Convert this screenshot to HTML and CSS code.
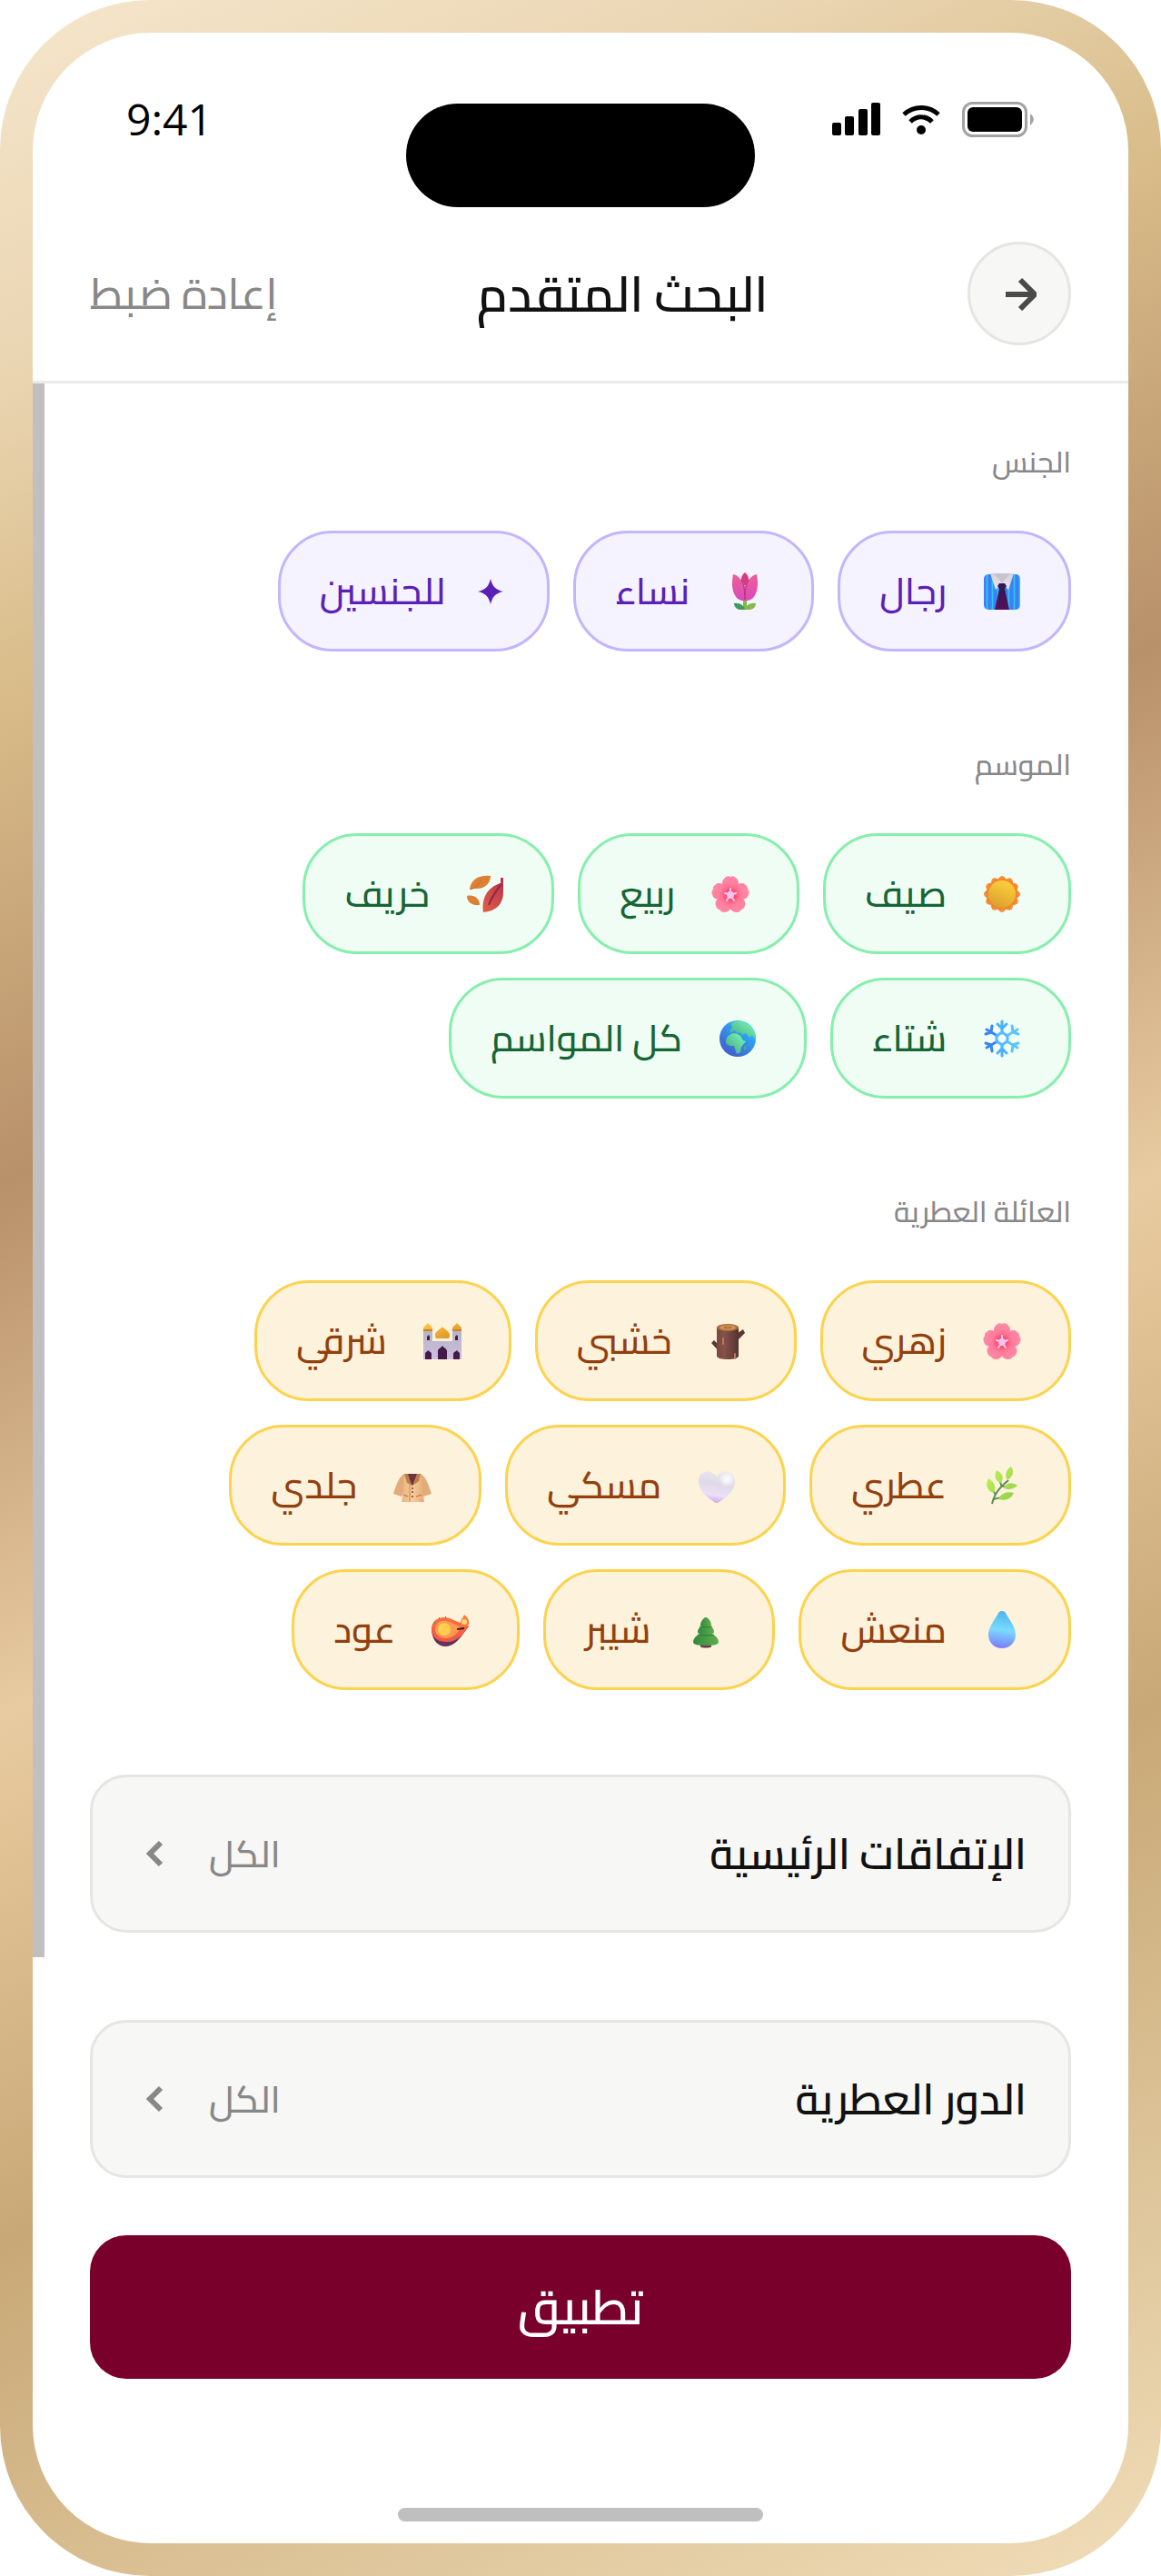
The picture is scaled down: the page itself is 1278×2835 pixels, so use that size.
FILE: index.html
```
<!DOCTYPE html>
<html lang="ar" dir="rtl">
<head>
    <meta charset="UTF-8">
    <meta name="viewport" content="width=device-width, initial-scale=1">
    <title>البحث المتقدم</title>
    <link rel="stylesheet" href="styles.css">
</head>
<body>
    <svg class="sprite" aria-hidden="true">
        <defs>
            <linearGradient id="g-petal" x1="0" y1="0" x2="0" y2="1">
                <stop offset="0" stop-color="#ff8aa6"/>
                <stop offset="1" stop-color="#ff6f95"/>
            </linearGradient>
            <radialGradient id="g-heart-pink">
                <stop offset="0" stop-color="#ff2f50"/>
                <stop offset=".5" stop-color="#ff4d6c" stop-opacity=".8"/>
                <stop offset="1" stop-color="#ff7d9c" stop-opacity="0"/>
            </radialGradient>
            <linearGradient id="g-stripe" x1="0" y1="0" x2="6" y2="0" gradientUnits="userSpaceOnUse" spreadMethod="repeat">
                <stop offset="0" stop-color="#3b82f0"/>
                <stop offset=".5" stop-color="#3b82f0"/>
                <stop offset=".75" stop-color="#2fc4fb"/>
                <stop offset="1" stop-color="#3b82f0"/>
            </linearGradient>
            <linearGradient id="g-collar" x1="0" y1="0" x2="0" y2="1">
                <stop offset="0" stop-color="#d2d2d4"/>
                <stop offset="1" stop-color="#f1e2fb"/>
            </linearGradient>
            <linearGradient id="g-tie" x1="0" y1="0" x2="0" y2="1">
                <stop offset="0" stop-color="#2c1a4f"/>
                <stop offset="1" stop-color="#54125c"/>
            </linearGradient>
            <linearGradient id="g-tulip" x1="0" y1="0" x2="0" y2="1">
                <stop offset="0" stop-color="#ee5f96"/>
                <stop offset="1" stop-color="#d94bbb"/>
            </linearGradient>
            <linearGradient id="g-sun" x1=".7" y1="0" x2=".3" y2="1">
                <stop offset="0" stop-color="#ffd13c"/>
                <stop offset="1" stop-color="#d9a02e"/>
            </linearGradient>
            <linearGradient id="g-rays" x1="0" y1="0" x2="1" y2="1">
                <stop offset="0" stop-color="#f9a03a"/>
                <stop offset="1" stop-color="#f0762c"/>
            </linearGradient>
            <linearGradient id="g-leaf" x1="1" y1="0" x2="0" y2="1">
                <stop offset="0" stop-color="#b93250"/>
                <stop offset="1" stop-color="#de6243"/>
            </linearGradient>
            <linearGradient id="g-leaf2" x1="0" y1="0" x2="1" y2="1">
                <stop offset="0" stop-color="#ea7c35"/>
                <stop offset="1" stop-color="#cf8434"/>
            </linearGradient>
            <linearGradient id="g-sea" x1=".8" y1=".2" x2=".2" y2="1">
                <stop offset="0" stop-color="#26b6ff"/>
                <stop offset="1" stop-color="#4656c8"/>
            </linearGradient>
            <linearGradient id="g-land" x1="1" y1="0" x2="0" y2="1">
                <stop offset="0" stop-color="#7dffb4"/>
                <stop offset="1" stop-color="#3f9f86"/>
            </linearGradient>
            <linearGradient id="g-wood" x1="0" y1="0" x2="1" y2="0">
                <stop offset="0" stop-color="#7a4840"/>
                <stop offset=".35" stop-color="#85524a"/>
                <stop offset="1" stop-color="#54332f"/>
            </linearGradient>
            <linearGradient id="g-dome" x1="0" y1="0" x2="1" y2="1">
                <stop offset="0" stop-color="#ffc93f"/>
                <stop offset="1" stop-color="#d98b24"/>
            </linearGradient>
            <linearGradient id="g-wall" x1="0" y1="0" x2="0" y2="1">
                <stop offset="0" stop-color="#b8b3c4"/>
                <stop offset="1" stop-color="#cdbfdf"/>
            </linearGradient>
            <linearGradient id="g-herb" x1="0" y1="0" x2="1" y2="1">
                <stop offset="0" stop-color="#c8f25c"/>
                <stop offset="1" stop-color="#8fcf45"/>
            </linearGradient>
            <linearGradient id="g-heart" x1=".6" y1="0" x2=".4" y2="1">
                <stop offset="0" stop-color="#e9e7ee"/>
                <stop offset=".4" stop-color="#dedae6"/>
                <stop offset=".75" stop-color="#ecdffa"/>
                <stop offset="1" stop-color="#c9a6f0"/>
            </linearGradient>
            <radialGradient id="g-shine">
                <stop offset="0" stop-color="#fff"/>
                <stop offset="1" stop-color="#fff" stop-opacity="0"/>
            </radialGradient>
            <linearGradient id="g-coat" x1="0" y1="0" x2="1" y2="0">
                <stop offset="0" stop-color="#e9b581"/>
                <stop offset=".5" stop-color="#f6cb95"/>
                <stop offset="1" stop-color="#e4ab7c"/>
            </linearGradient>
            <linearGradient id="g-drop" x1=".5" y1="0" x2=".4" y2="1">
                <stop offset="0" stop-color="#4db4e6"/>
                <stop offset=".5" stop-color="#79dcff"/>
                <stop offset="1" stop-color="#7b79fb"/>
            </linearGradient>
            <linearGradient id="g-tree" x1="0" y1="0" x2="1" y2="0">
                <stop offset="0" stop-color="#2f8a3c"/>
                <stop offset="1" stop-color="#62ad4e"/>
            </linearGradient>
            <linearGradient id="g-lamp" x1="0" y1="0" x2="0" y2="1">
                <stop offset="0" stop-color="#ff6f3c"/>
                <stop offset="1" stop-color="#f9543f"/>
            </linearGradient>
        </defs>

        <symbol id="i-shirt" viewBox="0 0 42 42">
            <rect x="1" y="2" width="40" height="39" rx="5" fill="url(#g-stripe)"/>
            <path d="M8 1h26L28 19l-7-7-7 7z" fill="url(#g-collar)"/>
            <path d="M12 1h18l-9 11z" fill="#c6c4ca"/>
            <path d="M18 12h6l2 3-2 3 5 23H13l5-23-2-3z" fill="url(#g-tie)"/>
        </symbol>

        <symbol id="i-tulip" viewBox="0 0 42 42">
            <rect x="19" y="27" width="4" height="14" fill="#84b93e"/>
            <path d="M9 34c6-1 11 2 12 7h-6c-4-1-6-4-6-7z" fill="#3d9c5c"/>
            <path d="M33 34c-6-1-11 2-12 7h6c4-1 6-4 6-7z" fill="#86b84f"/>
            <path d="M21 0c4 3 5 8 4 14h-8C16 8 17 3 21 0z" fill="#d63d80"/>
            <path d="M8 2c5 1 9 5 13 13C25 7 29 3 34 2c2 10 1 18-2 23-3 6-8 6-11 6s-8 0-11-6C7 20 6 12 8 2z" fill="url(#g-tulip)"/>
            <path d="M17 8c1 3 4 7 4 22 0-15 3-19 4-22" fill="none" stroke="#b93382" stroke-width="1"/>
        </symbol>

        <symbol id="i-blossom" viewBox="0 0 42 42">
            <g fill="url(#g-petal)">
                <path id="petal" d="M21 22C11 15 10 6 15 3c2-2 4-2 6-1 2-1 4-1 6 1 5 3 4 12-6 19z"/>
                <use href="#petal" transform="rotate(72 21 22)"/>
                <use href="#petal" transform="rotate(144 21 22)"/>
                <use href="#petal" transform="rotate(216 21 22)"/>
                <use href="#petal" transform="rotate(288 21 22)"/>
            </g>
            <circle cx="21" cy="22" r="13" fill="url(#g-heart-pink)"/>
            <g stroke="#fbcdf5" stroke-width="2" stroke-linecap="round">
                <path d="M21 22V15"/>
                <path d="M21 22l6-2"/>
                <path d="M21 22l4 6"/>
                <path d="M21 22l-4 6"/>
                <path d="M21 22l-6-2"/>
            </g>
            <circle cx="21" cy="22" r="4" fill="#f2c4f6"/>
        </symbol>

        <symbol id="i-sun" viewBox="0 0 42 42">
            <circle cx="21" cy="21" r="17" fill="url(#g-rays)"/>
            <g fill="url(#g-rays)">
                <path id="ray" d="M15 6c2-1 3-5 6-5s4 4 6 5z"/>
                <use href="#ray" transform="rotate(30 21 21)"/>
                <use href="#ray" transform="rotate(60 21 21)"/>
                <use href="#ray" transform="rotate(90 21 21)"/>
                <use href="#ray" transform="rotate(120 21 21)"/>
                <use href="#ray" transform="rotate(150 21 21)"/>
                <use href="#ray" transform="rotate(180 21 21)"/>
                <use href="#ray" transform="rotate(210 21 21)"/>
                <use href="#ray" transform="rotate(240 21 21)"/>
                <use href="#ray" transform="rotate(270 21 21)"/>
                <use href="#ray" transform="rotate(300 21 21)"/>
                <use href="#ray" transform="rotate(330 21 21)"/>
            </g>
            <circle cx="21" cy="21" r="15" fill="url(#g-sun)"/>
        </symbol>

        <symbol id="i-snow" viewBox="0 0 42 42">
            <g fill="none" stroke-width="3" stroke-linecap="round" stroke-linejoin="round">
                <path d="M21 15V2M16 5l5 5 5-5" stroke="#4db0fb"/>
                <path d="M26 18l12-7M32 7l1 7 6 2" stroke="#5ac6ff"/>
                <path d="M26 24l12 7M32 35l1-7 6-2" stroke="#5ac6ff"/>
                <path d="M21 27v13M16 37l5-5 5 5" stroke="#4db0fb"/>
                <path d="M16 24L4 31M10 35l-1-7-6-2" stroke="#3b82f6"/>
                <path d="M16 18L4 11M10 7L9 14l-6 2" stroke="#3b82f6"/>
                <path d="M21 14l6 4v6l-6 4-6-4v-6z" stroke="#55bdff"/>
            </g>
        </symbol>

        <symbol id="i-leaves" viewBox="0 0 42 42">
            <path d="M4 15C6 5 13 0 27 1c0 8-6 15-18 14l-5 1z" fill="url(#g-leaf2)"/>
            <path d="M5 16c5-2 9-6 12-10" fill="none" stroke="#c66a2b" stroke-width="1"/>
            <path d="M1 23c8-2 14 3 14 10C7 34 1 30 1 23z" fill="url(#g-leaf2)"/>
            <path d="M19 41c-2-14 3-27 19-32V3h3v16c0 13-8 21-22 22z" fill="url(#g-leaf)"/>
            <path d="M39 10c-5 6-10 13-14 23" fill="none" stroke="#8f2748" stroke-width="2"/>
        </symbol>

        <symbol id="i-globe" viewBox="0 0 42 42">
            <circle cx="21" cy="21" r="20" fill="url(#g-sea)"/>
            <path d="M14 4c5-3 11-3 15-1 6 3 9 7 11 12 1 3 1 5 0 7l-3-5-3 3-4-5-4 2-3-3-3 1-2-3-4 3-2-3 3-3z" fill="url(#g-land)"/>
            <path d="M12 17c4-3 9-2 12 1l3 5 3 1-5 6-1 6-4 2-3-9c-4 0-8 0-9-4 0-4 1-6 4-8z" fill="url(#g-land)"/>
            <path d="M28 30l3-2-1 5-2 1z" fill="#4ea886"/>
        </symbol>

        <symbol id="i-wood" viewBox="0 0 42 42">
            <path d="M32 20l8-8-2-4-9 6zM12 26L6 20l-3 3 9 10z" fill="#5b3833"/>
            <path d="M9 6h24v31c0 3-6 4-12 4S9 40 9 37z" fill="url(#g-wood)"/>
            <ellipse cx="21" cy="6" rx="12" ry="4" fill="#a8693c"/>
            <ellipse cx="21" cy="6" rx="9" ry="3" fill="#d39352"/>
            <ellipse cx="21" cy="6" rx="4" ry="1" fill="none" stroke="#a8693c" stroke-width="1"/>
            <path d="M16 18v6M29 35v5" stroke="#c07360" stroke-width="2" stroke-linecap="round"/>
        </symbol>

        <symbol id="i-mosque" viewBox="0 0 42 42">
            <path d="M0 10h10v11h22V10h10v31H0z" fill="url(#g-wall)"/>
            <path d="M0 9c-1-4 3-5 5-8 2 3 6 4 5 8zM32 9c-1-4 3-5 5-8 2 3 6 4 5 8zM14 18c-4-7 4-9 7-13 3 4 11 6 7 13z" fill="url(#g-dome)"/>
            <path d="M0 9h10M32 9h10" stroke="#c9822a" stroke-width="2"/>
            <path d="M16 41V32c0-3 3-3 5-6 2 3 5 3 5 6v9zM2 41v-6c0-2 2-2 3-4 2 2 4 2 4 4v6zM33 41v-6c0-2 2-2 4-4 1 2 3 2 3 4v6zM4 20v-4l2-2 1 2v4zM35 20v-4l2-2 1 2v4z" fill="#421a4c"/>
        </symbol>

        <symbol id="i-herb" viewBox="0 0 42 42">
            <path d="M10 41c3-13 10-19 18-26M12 36c7-2 11-2 18-5M14 31l-6-9M21 23l-3-9M22 22h13" fill="none" stroke="#5c8a55" stroke-width="2"/>
            <path d="M31 0c4 5 2 11-4 15-4-6-1-12 4-15zM15 4c6 3 9 8 5 14-7-2-8-8-5-14zM6 13c7 4 9 10 6 16-7-1-10-9-6-16zM38 21c-6 5-12 5-16 2 5-6 11-6 16-2zM34 29c-3 7-10 9-17 7 3-7 10-9 17-7z" fill="url(#g-herb)"/>
        </symbol>

        <symbol id="i-heart" viewBox="0 0 42 42">
            <path id="heart" d="M21 40c-2 0-4-2-7-4C6 30 1 24 1 16 1 4 16 2 21 12 26 2 41 4 41 16c0 8-5 14-13 20-3 2-5 4-7 4z" fill="url(#g-heart)"/>
            <circle cx="32" cy="14" r="9" fill="url(#g-shine)"/>
        </symbol>

        <symbol id="i-coat" viewBox="0 0 42 42">
            <path d="M12 8C6 11 3 21 0 30l9 3 5-10zM30 8c6 3 9 13 12 22l-9 3-5-10z" fill="#e3ab7a"/>
            <path d="M12 8h18l4 31H9l2-12z" fill="url(#g-coat)"/>
            <path d="M14 8h14l-4 10-3 3-4-3z" fill="#70323e"/>
            <path d="M12 8h4l3 9 2 4-6-3zM30 8h-4l-5 13 7-5z" fill="#bd7e4e"/>
            <path d="M18 20v19" stroke="#c58c5c" stroke-width="1"/>
            <path d="M11 31l5 2M31 31l-6 2" stroke="#c2674a" stroke-width="1"/>
            <g fill="#7e3f36">
                <circle cx="21" cy="24" r="1"/>
                <circle cx="21" cy="28" r="1"/>
                <circle cx="21" cy="33" r="1"/>
            </g>
        </symbol>

        <symbol id="i-drop" viewBox="0 0 42 42">
            <path d="M21 0c3 0 4 2 5 4 4 7 10 14 10 22 0 9-7 15-15 15S6 35 6 26C6 18 12 11 16 4c1-2 2-4 5-4z" fill="url(#g-drop)"/>
        </symbol>

        <symbol id="i-tree" viewBox="0 0 42 42">
            <path d="M15 35h12v4c0 2-12 2-12 0z" fill="#6b3b4b"/>
            <path d="M21 24c9 0 14 6 14 10 0 3-5 4-14 4S7 37 7 34c0-4 5-10 14-10z" fill="url(#g-tree)"/>
            <path d="M21 15c6 0 9 5 9 8 0 4-18 4-18 0 0-3 3-8 9-8z" fill="url(#g-tree)"/>
            <path d="M21 7c3 0 6 6 6 8 0 3-12 3-12 0 0-2 3-8 6-8z" fill="url(#g-tree)"/>
            <path d="M14 17c4 1 10 1 14 0M12 26c6 1 12 1 18 0" fill="none" stroke="#2b7d2e" stroke-width="1"/>
        </symbol>

        <symbol id="i-lamp" viewBox="0 0 42 42">
            <path d="M0 18c0 9 3 20 15 21 12 0 18-12 26-22z" fill="#6a2f5c"/>
            <path d="M0 20C0 8 12 5 20 8c7 3 13 6 21 8-5 9-13 18-24 18C6 34 0 28 0 20z" fill="url(#g-lamp)"/>
            <path d="M4 20c0-8 8-11 16-8l13 6c-5 7-10 12-17 12C9 30 4 26 4 20z" fill="#ff9a55"/>
            <circle cx="14" cy="20" r="7" fill="#ffcf4d"/>
            <path d="M28 20l8-1" stroke="#3b1c3c" stroke-width="2"/>
            <path d="M36 4c4 3 6 7 5 10-1 4-8 4-9 0-1-4 3-6 4-10z" fill="#ff7843"/>
            <circle cx="36" cy="12" r="3" fill="#ffdc6a"/>
            <path d="M3 13h1M8 8h1M15 7h1M2 25h1M8 32h1M18 33h1M25 30h1" stroke="#3f9a5e" stroke-width="2"/>
        </symbol>
    </svg>

    <div class="phone">
        <div class="island"></div>
        <div class="screen">
            <div class="status">
                <span class="time">9:41</span>
                <div class="status-icons">
                    <svg class="signal" viewBox="0 0 53 36">
                        <rect x="0" y="22" width="10" height="14" rx="2"/>
                        <rect x="14" y="15" width="10" height="21" rx="2"/>
                        <rect x="29" y="7" width="10" height="29" rx="2"/>
                        <rect x="43" y="0" width="10" height="36" rx="2"/>
                    </svg>
                    <svg class="wifi" viewBox="0 0 42 36">
                        <path d="M2 13C13 3 29 3 40 13M9 21c7-7 17-7 24 0" fill="none" stroke="#000" stroke-width="5"/>
                        <circle cx="21" cy="30" r="5"/>
                    </svg>
                    <svg class="battery" viewBox="0 0 80 39">
                        <rect x="1.5" y="1.5" width="69" height="36" rx="10" fill="none" stroke="#a3a3a3" stroke-width="3"/>
                        <rect x="6" y="6" width="60" height="27" rx="6"/>
                        <path d="M75 13c5 4 5 9 0 13z" fill="#a3a3a3"/>
                    </svg>
                </div>
            </div>

            <header class="header">
                <button class="back" type="button" aria-label="رجوع">
                    <svg viewBox="0 0 38 38"><path d="M4 20h32M20 4l16 16-16 16" fill="none" stroke="#4a4a4a" stroke-width="6"/></svg>
                </button>
                <h1 class="title">البحث المتقدم</h1>
                <button class="reset" type="button">إعادة ضبط</button>
            </header>

            <main class="content">
                <section class="group purple">
                    <h2>الجنس</h2>
                    <div class="chips">
                        <button class="chip" type="button"><svg class="icon"><use href="#i-shirt"/></svg>رجال</button>
                        <button class="chip" type="button"><svg class="icon"><use href="#i-tulip"/></svg>نساء</button>
                        <button class="chip" type="button"><svg class="star" viewBox="0 0 38 38"><path d="M19 5c2 8 5 12 14 14-9 2-12 6-14 14-2-8-5-12-14-14 9-2 12-6 14-14z" fill="#5b21b6"/></svg>للجنسين</button>
                    </div>
                </section>

                <section class="group green">
                    <h2>الموسم</h2>
                    <div class="chips">
                        <button class="chip" type="button"><svg class="icon"><use href="#i-sun"/></svg>صيف</button>
                        <button class="chip" type="button"><svg class="icon"><use href="#i-blossom"/></svg>ربيع</button>
                        <button class="chip" type="button"><svg class="icon"><use href="#i-leaves"/></svg>خريف</button>
                        <button class="chip" type="button"><svg class="icon"><use href="#i-snow"/></svg>شتاء</button>
                        <button class="chip" type="button"><svg class="icon"><use href="#i-globe"/></svg>كل المواسم</button>
                    </div>
                </section>

                <section class="group amber">
                    <h2>العائلة العطرية</h2>
                    <div class="chips">
                        <button class="chip" type="button"><svg class="icon"><use href="#i-blossom"/></svg>زهري</button>
                        <button class="chip" type="button"><svg class="icon"><use href="#i-wood"/></svg>خشبي</button>
                        <button class="chip" type="button"><svg class="icon"><use href="#i-mosque"/></svg>شرقي</button>
                        <button class="chip" type="button"><svg class="icon"><use href="#i-herb"/></svg>عطري</button>
                        <button class="chip" type="button"><svg class="icon"><use href="#i-heart"/></svg>مسكي</button>
                        <button class="chip" type="button"><svg class="icon"><use href="#i-coat"/></svg>جلدي</button>
                        <button class="chip" type="button"><svg class="icon"><use href="#i-drop"/></svg>منعش</button>
                        <button class="chip" type="button"><svg class="icon"><use href="#i-tree"/></svg>شيبر</button>
                        <button class="chip" type="button"><svg class="icon"><use href="#i-lamp"/></svg>عود</button>
                    </div>
                </section>

                <button class="picker" type="button">
                    <span>الإتفاقات الرئيسية</span>
                    <span class="value">الكل
                        <svg class="chevron" viewBox="0 0 20 30"><path d="M17 3L5 15l12 12" fill="none" stroke="#888" stroke-width="6"/></svg>
                    </span>
                </button>
                <button class="picker" type="button">
                    <span>الدور العطرية</span>
                    <span class="value">الكل
                        <svg class="chevron" viewBox="0 0 20 30"><path d="M17 3L5 15l12 12" fill="none" stroke="#888" stroke-width="6"/></svg>
                    </span>
                </button>
                <div class="scrollbar"></div>
            </main>

            <footer class="footer">
                <button class="apply" type="button">تطبيق</button>
                <div class="home"></div>
            </footer>
        </div>
    </div>
</body>
</html>
```
FILE: styles.css
```
*{
    box-sizing: border-box;
    margin: 0;
    padding: 0;
}
body{
    background-color: #fff;
    font-family: Cairo, "DejaVu Sans", sans-serif;
    color: #111;
}
button{
    font-family: inherit;
    color: inherit;
    background: none;
    border: 0;
    cursor: pointer;
}
.sprite{
    position: absolute;
    width: 0;
    height: 0;
}

/* device frame */
.phone{
    position: relative;
    display: flex;
    min-height: 100vh;
    padding: 36px;
    border-radius: 165px;
    background: linear-gradient(155deg, #f5e6cc 0%, #ead5b2 12%, #d9bd8a 22%, #b8906a 38%, #e8cba0 55%, #c8a876 72%, #f0ddb8 100%);
}
.screen{
    display: flex;
    flex-direction: column;
    flex: 1;
    min-width: 0;
    border-radius: 130px;
    background-color: #fff;
}
.island{
    position: absolute;
    top: 114px;
    left: 50%;
    width: 384px;
    height: 114px;
    margin-left: -192px;
    border-radius: 57px;
    background-color: #000;
}

/* status bar */
.status{
    display: flex;
    direction: ltr;
    justify-content: space-between;
    align-items: center;
    height: 190px;
    padding: 0 103px;
}
.time{
    font: 500 48px/60px "Open Sans", "Noto Sans", sans-serif;
    color: #000;
}
.status-icons{
    display: flex;
    align-items: center;
    gap: 24px;
}
.signal{
    width: 53px;
    height: 36px;
}
.wifi{
    width: 42px;
    height: 36px;
}
.battery{
    width: 80px;
    height: 39px;
}

/* header */
.header{
    display: flex;
    justify-content: space-between;
    align-items: center;
    padding: 40px 63px 39px;
    border-bottom: 3px solid #ebebeb;
}
.back{
    display: flex;
    justify-content: center;
    align-items: center;
    width: 114px;
    height: 114px;
    border: 3px solid #e5e5e3;
    border-radius: 50%;
    background-color: #f7f7f5;
}
.back svg{
    width: 38px;
    height: 38px;
}
.title{
    font-size: 54px;
    line-height: 99px;
    font-weight: 600;
}
.reset{
    font-size: 47px;
    font-weight: 500;
    color: #888;
}

/* filters */
.content{
    position: relative;
    padding: 55px 63px 63px;
}
.group{
    margin-bottom: 93px;
}
.group h2{
    margin-bottom: 45px;
    font-size: 32px;
    line-height: 62px;
    font-weight: 500;
    color: #888;
}
.chips{
    display: flex;
    flex-wrap: wrap;
    gap: 26px;
}
.chip{
    display: flex;
    align-items: center;
    gap: 31px;
    padding: 26px 43px;
    border: 3px solid;
    border-radius: 60px;
    font-size: 41px;
    line-height: 75px;
    font-weight: 500;
}
.icon{
    width: 42px;
    height: 42px;
    margin: 0 9px;
}
.star{
    width: 38px;
    height: 38px;
}
.purple .chip{
    color: #5b21b6;
    border-color: #c4b5fd;
    background-color: #f5f3ff;
}
.green .chip{
    color: #166534;
    border-color: #86efac;
    background-color: #f0fdf4;
}
.amber .chip{
    color: #92400e;
    border-color: #fcd34d;
    background-color: #fdf2dc;
}

.picker{
    display: flex;
    justify-content: space-between;
    align-items: center;
    width: 100%;
    padding: 41px 46px;
    border: 3px solid #e5e5e3;
    border-radius: 40px;
    background-color: #f7f7f5;
    font-size: 47px;
    line-height: 86px;
    font-weight: 600;
}
.picker + .picker{
    margin-top: 96px;
}
.value{
    display: flex;
    align-items: center;
    gap: 50px;
    font-size: 41px;
    font-weight: 500;
    color: #888;
}
.chevron{
    width: 20px;
    height: 30px;
    margin-left: 12px;
}
.scrollbar{
    position: absolute;
    top: 0;
    left: 0;
    width: 13px;
    height: 85%;
    background-color: #c0c0c0;
}

/* bottom bar */
.footer{
    display: flex;
    flex-direction: column;
    flex: 1;
    padding: 0 63px 24px;
}
.apply{
    width: 100%;
    padding: 29px;
    border-radius: 40px;
    background-color: #7a002c;
    color: #fff;
    font-size: 53px;
    line-height: 100px;
    font-weight: 600;
}
.home{
    width: 402px;
    height: 15px;
    margin: auto auto 0;
    border-radius: 8px;
    background-color: #bfbfbf;
}
```
